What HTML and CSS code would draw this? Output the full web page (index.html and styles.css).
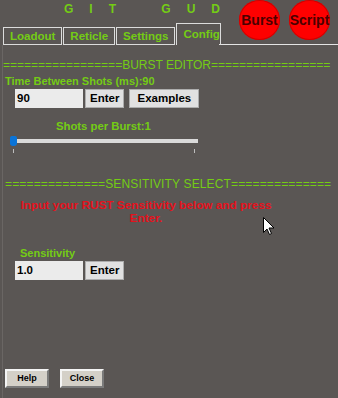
FILE: index.html
```html
<!DOCTYPE html>
<html>
<head>
<meta charset="utf-8">
<link rel="stylesheet" href="styles.css">
</head>
<body>
<div class="app">
  <div class="header">
    <div class="title">GIT GUD</div>
    <div class="circles">
      <div class="circle">Burst</div>
      <div class="circle">Script</div>
    </div>
    <div class="tabs">
      <div class="tab">Loadout</div>
      <div class="tab">Reticle</div>
      <div class="tab">Settings</div>
      <div class="tab active">Config</div>
    </div>
  </div>
  <div class="page">
    <div class="divider">=================BURST EDITOR=================</div>
    <div class="label">Time Between Shots (ms):90</div>
    <div class="row">
      <div class="input">90</div>
      <div class="btn">Enter</div>
      <div class="btn wide">Examples</div>
    </div>
    <div class="label shots">Shots per Burst:1</div>
    <div class="slider">
      <div class="thumb"></div>
      <div class="track"></div>
    </div>
    <div class="ticks"><span class="tick"></span><span class="tick"></span></div>
    <div class="divider sens">==============SENSITIVITY SELECT==============</div>
    <div class="warn">Input your RUST Sensitivity below and press Enter.</div>
    <div class="label senslabel">Sensitivity</div>
    <div class="row">
      <div class="input">1.0</div>
      <div class="btn">Enter</div>
    </div>
    <div class="spacer"></div>
    <div class="footer">
      <div class="btn3d">Help</div>
      <div class="btn3d">Close</div>
    </div>
    <svg class="cursor" width="13" height="19" viewBox="0 0 13 19"><path d="M0.5 0.5 L0.5 15.5 L4 12 L6.5 17.5 L8.5 16.5 L6 11 L11 11 Z" fill="#fff" stroke="#000" stroke-width="1"/></svg>
  </div>
</div>
</body>
</html>
```
FILE: styles.css
```css
html, body {
  margin: 0;
  padding: 0;
  background: #5a5654;
}
.app {
  width: 338px;
  height: 398px;
  font-family: "Liberation Sans", Arial, sans-serif;
  overflow: hidden;
  display: flex;
  flex-direction: column;
}
.header {
  display: grid;
  grid-template-columns: 219px 1fr;
  grid-template-rows: 23px 22px;
}
.title {
  grid-column: 1;
  grid-row: 1;
  padding-left: 64px;
  padding-top: 2px;
  font-weight: bold;
  font-size: 12px;
  line-height: 14px;
  letter-spacing: 16px;
  word-spacing: 10px;
  color: #74cc14;
  white-space: pre;
}
.circles {
  grid-column: 2;
  grid-row: 1 / span 2;
  display: flex;
  align-items: flex-start;
  gap: 9px;
  padding-left: 20px;
  border-bottom: 1px solid #e4e4e4;
}
.circle {
  width: 41px;
  height: 40px;
  border-radius: 50%;
  background: #fe0000;
  box-shadow: inset 0 0 0 1px #d00000;
  color: #4a0000;
  font-weight: bold;
  font-size: 14px;
  display: flex;
  align-items: center;
  justify-content: center;
}
.tabs {
  grid-column: 1;
  grid-row: 2;
  display: flex;
  align-items: flex-end;
  padding-left: 3px;
  gap: 1px;
}
.tab {
  height: 18px;
  box-sizing: border-box;
  border: 1px solid #dcdcdc;
  padding: 0 6px;
  font-weight: bold;
  font-size: 11.5px;
  line-height: 16px;
  color: #74cc14;
}
.tab.active {
  height: 22px;
  border-bottom: none;
  line-height: 20px;
  width: 51px;
  margin-right: -1px;
  padding: 0 0 0 6px;
}
.page {
  position: relative;
  flex: 1;
  display: flex;
  flex-direction: column;
  margin-left: 2px;
  border-left: 1px solid #6a6664;
}
.divider {
  margin-top: 13px;
  font-size: 12px;
  line-height: 14px;
  color: #74cc14;
  white-space: nowrap;
}
.divider.sens {
  margin-top: 23px;
  padding-left: 2px;
  letter-spacing: 0.15px;
}
.label {
  font-weight: bold;
  font-size: 11px;
  line-height: 14px;
  color: #74cc14;
  padding-left: 2px;
  margin-top: 2px;
}
.label.shots {
  margin-top: 11px;
  padding-left: 53px;
  font-size: 11.3px;
}
.label.senslabel {
  margin-top: 21px;
  padding-left: 17px;
}
.row {
  display: flex;
  gap: 2px;
  margin-top: 1px;
  padding-left: 12px;
}
.input {
  width: 68px;
  height: 19px;
  box-sizing: border-box;
  background: #ebebeb;
  font-weight: bold;
  font-size: 11.5px;
  line-height: 19px;
  padding-left: 2px;
  color: #000;
}
.btn {
  height: 19px;
  box-sizing: border-box;
  background: #e1e1e1;
  border: 1px solid #adadad;
  font-weight: bold;
  font-size: 11.5px;
  line-height: 17px;
  padding: 0 4px;
  color: #000;
}
.btn.wide {
  margin-left: 3px;
  width: 70px;
  text-align: center;
}
.slider {
  display: flex;
  align-items: center;
  margin-top: 3px;
  padding-left: 7px;
  height: 10px;
}
.thumb {
  width: 7px;
  height: 10px;
  background: #0a74d8;
  border-radius: 2px 2px 3px 3px;
}
.track {
  width: 181px;
  height: 4px;
  background: #dadada;
}
.ticks {
  display: flex;
  gap: 180px;
  padding-left: 10px;
  margin-top: 3px;
  height: 5px;
}
.tick {
  width: 1px;
  height: 4px;
  background: #bdbdbd;
}
.warn {
  width: 264px;
  margin-top: 8px;
  margin-left: 11px;
  text-align: center;
  font-weight: bold;
  font-size: 11.8px;
  line-height: 13px;
  color: #e4121d;
}
.spacer {
  flex: 1;
}
.footer {
  display: flex;
  gap: 11px;
  padding-left: 2px;
  margin-bottom: 10px;
}
.btn3d {
  width: 44px;
  height: 19px;
  box-sizing: border-box;
  background: #d4d0c8;
  border: 2px solid;
  border-color: #f4f4f4 #7a7a7a #7a7a7a #f4f4f4;
  font-weight: bold;
  font-size: 9px;
  line-height: 15px;
  text-align: center;
  color: #000;
}
.cursor {
  position: absolute;
  left: 260px;
  top: 172px;
}
```
